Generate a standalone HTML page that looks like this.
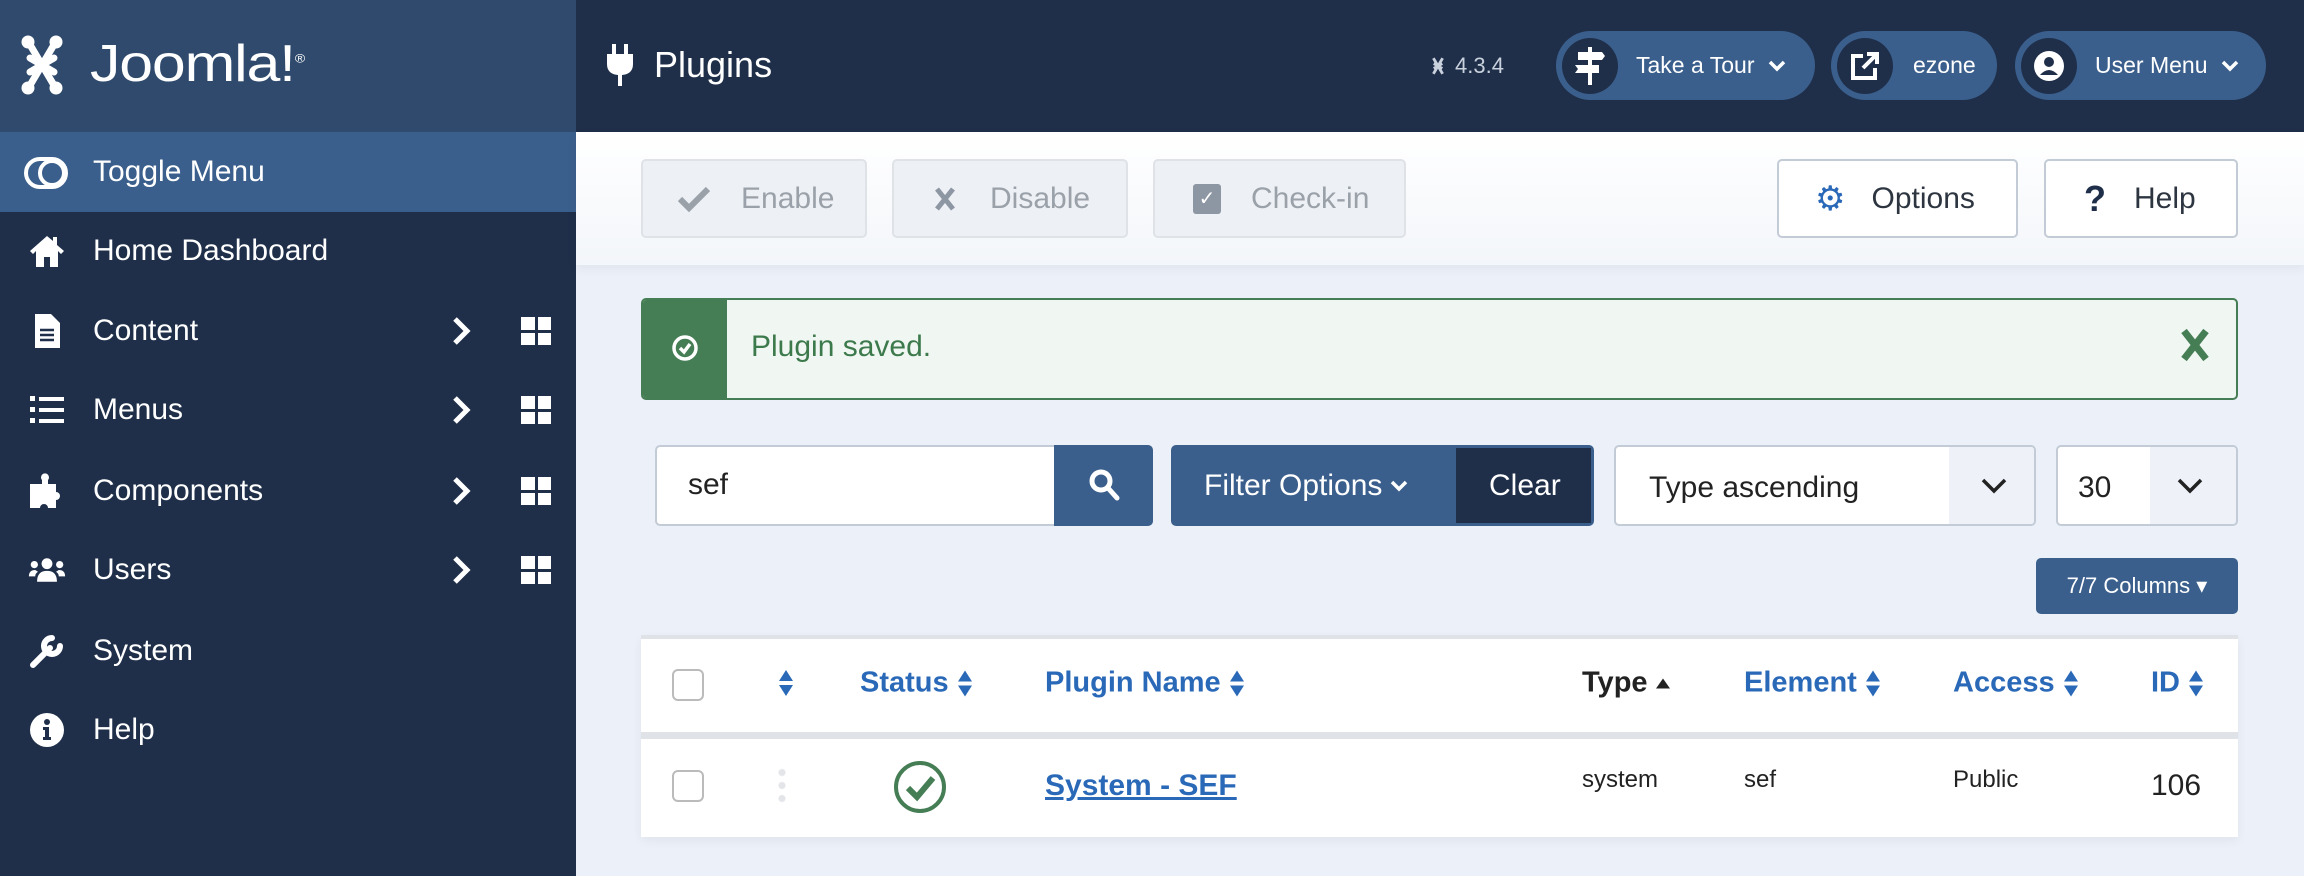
<!DOCTYPE html>
<html><head><meta charset="utf-8"><style>
*{box-sizing:border-box;margin:0;padding:0}
body{width:2304px;height:876px;overflow:hidden;background:#ecf0f8;font-family:"Liberation Sans",sans-serif;position:relative}
.a{position:absolute}
.side{left:0;top:0;width:576px;height:876px;background:#1f2f4a}
.logo{left:0;top:0;width:576px;height:132px;background:#2f4a6d}
.hdr{left:576px;top:0;width:1728px;height:132px;background:#1f2f4a}
.tog{left:0;top:132px;width:576px;height:80px;background:#3b5f8c}
.mi{color:#fff;font-size:30px;left:93px;transform:translateY(-50%)}
.ic{left:28px;width:38px;height:38px;transform:translateY(-50%)}
.chev{left:450px;transform:translateY(-50%)}
.grid{left:521px;width:30px;height:28px;transform:translateY(-50%);display:grid;grid-template-columns:1fr 1fr;gap:3px}
.grid i{background:#fff;display:block}
.pill{top:31px;height:69px;border-radius:35px;background:#3b5f8c;color:#fff;font-size:23px;display:flex;align-items:center}
.pill .c{width:56px;height:56px;border-radius:50%;background:#1f2f4a;margin-left:6px;display:flex;align-items:center;justify-content:center}
.tb{left:576px;top:132px;width:1728px;height:133px;background:linear-gradient(#fff,#f3f6fa);box-shadow:0 4px 10px rgba(0,0,0,.05)}
.btn{top:159px;height:79px;border-radius:5px;display:flex;align-items:center;font-size:30px}
.dis{background:#edf0f4;border:2px solid #dfe3e8;color:#9aa1a9}
.wh{background:#fff;border:2px solid #c3cbd6;color:#2d3540}
.th{top:683px;transform:translateY(-50%);font-size:29px;font-weight:bold;color:#2a69b8;display:flex;align-items:center}
.td{top:786px;transform:translateY(-50%);font-size:24px;color:#222}
.cb{width:32px;height:32px;border:2px solid #bbb;border-radius:6px;background:#fff;transform:translateY(-50%)}
.sa{margin-left:7px}
</style></head><body>
<div class="a side"></div>
<div class="a logo"></div>
<svg class="a" style="left:20px;top:34px" width="44" height="62" viewBox="0 0 44 62"><g fill="none" stroke="#fff" stroke-width="7" stroke-linecap="round"><path d="M9 9 L35 53 M35 9 L9 53 M10 24 L34 38 M34 24 L10 38"/></g><circle cx="8" cy="8" r="6.5" fill="#fff"/><circle cx="36" cy="8" r="6.5" fill="#fff"/><circle cx="8" cy="54" r="6.5" fill="#fff"/><circle cx="36" cy="54" r="6.5" fill="#fff"/></svg>
<div class="a" style="left:90px;top:34px;color:#fff;font-size:52px;transform:scaleX(1.17);transform-origin:left;letter-spacing:-1px">Joomla!<sup style="font-size:12px">®</sup></div>
<div class="a hdr"></div>
<svg class="a" style="left:607px;top:44px" width="26" height="42" viewBox="0 0 26 42"><rect x="5" y="0" width="4" height="10" fill="#fff"/><rect x="17" y="0" width="4" height="10" fill="#fff"/><path d="M0 10H26V20Q26 30 15 31V42H11V31Q0 30 0 20Z" fill="#fff"/></svg>
<div class="a" style="left:654px;top:44px;color:#fff;font-size:36px">Plugins</div>
<svg class="a" style="left:1427px;top:55px" width="22" height="22" viewBox="0 0 44 62"><g fill="none" stroke="#c9d1dc" stroke-width="8"><path d="M9 9 L35 53 M35 9 L9 53 M10 24 L34 38 M34 24 L10 38"/></g></svg>
<div class="a" style="left:1455px;top:53px;color:#c9d1dc;font-size:22px">4.3.4</div>
<div class="a pill" style="left:1556px;width:259px"><div class="c"><svg width="30" height="38" viewBox="0 0 30 38"><rect x="13" y="0" width="4" height="38" fill="#fff"/><path d="M3 5H27L30 9L27 13H3Z M0 18H24V26H0L3 22Z" fill="#fff"/></svg></div><span style="margin-left:18px">Take a Tour</span><svg style="margin-left:14px" width="18" height="14" viewBox="0 0 18 14"><path d="M2 3L9 10L16 3" stroke="#fff" stroke-width="3.5" fill="none"/></svg></div>
<div class="a pill" style="left:1831px;width:166px"><div class="c"><svg width="32" height="32" viewBox="0 0 32 32" fill="none" stroke="#fff" stroke-width="4"><path d="M14 6H4V28H26V18M18 4H28V14M28 4L14 18"/></svg></div><span style="margin-left:20px">ezone</span></div>
<div class="a pill" style="left:2015px;width:251px"><div class="c"><svg width="34" height="34" viewBox="0 0 34 34"><circle cx="17" cy="17" r="15" fill="#fff"/><circle cx="17" cy="13" r="5" fill="#1f2f4a"/><path d="M8 26Q17 16 26 26" fill="#1f2f4a"/></svg></div><span style="margin-left:18px">User Menu</span><svg style="margin-left:14px" width="18" height="14" viewBox="0 0 18 14"><path d="M2 3L9 10L16 3" stroke="#fff" stroke-width="3.5" fill="none"/></svg></div>

<div class="a tog"></div>
<svg class="a" style="left:24px;top:157px" width="44" height="32" viewBox="0 0 44 32" fill="none" stroke="#fff" stroke-width="4"><rect x="2" y="2" width="40" height="28" rx="14"/><circle cx="28" cy="16" r="12"/></svg>
<div class="a mi" style="top:172px">Toggle Menu</div>

<svg class="a ic" style="top:251px" viewBox="0 0 38 38"><path d="M19 4L2 19L5 22L8 19V35H16V25H22V35H30V19L33 22L36 19L29 13V5H25V9Z" fill="#fff"/></svg>
<div class="a mi" style="top:251px">Home Dashboard</div>
<svg class="a ic" style="top:331px" viewBox="0 0 38 38"><path d="M7 2H23L32 11V36H7Z" fill="#fff"/><path d="M12 18H26M12 23H26M12 28H26" stroke="#1f2f4a" stroke-width="2.5"/></svg>
<div class="a mi" style="top:331px">Content</div>
<svg class="a ic" style="top:410px" viewBox="0 0 38 38" fill="#fff"><rect x="2" y="5" width="5" height="5"/><rect x="2" y="16" width="5" height="5"/><rect x="2" y="27" width="5" height="5"/><rect x="11" y="6" width="25" height="4"/><rect x="11" y="17" width="25" height="4"/><rect x="11" y="28" width="25" height="4"/></svg>
<div class="a mi" style="top:410px">Menus</div>
<svg class="a ic" style="top:491px" viewBox="0 0 38 38" fill="#fff"><path d="M2 12H14V8A4 4 0 1 1 20 8V12H28V20A4 4 0 1 1 28 28V36H20A4 4 0 1 0 12 36H2Z"/></svg>
<div class="a mi" style="top:491px">Components</div>
<svg class="a ic" style="top:570px" viewBox="0 0 42 38" fill="#fff"><circle cx="21" cy="12" r="6"/><circle cx="7" cy="13" r="4"/><circle cx="35" cy="13" r="4"/><path d="M10 32Q10 20 21 20Q32 20 32 32Z M1 26Q1 19 8 19L11 21Q8 23 8 26Z M41 26Q41 19 34 19L31 21Q34 23 34 26Z"/></svg>
<div class="a mi" style="top:570px">Users</div>
<svg class="a ic" style="top:651px" viewBox="0 0 38 38"><path d="M5 33L22 16M24 6A8 8 0 1 0 32 14" stroke="#fff" stroke-width="6" stroke-linecap="round" fill="none"/></svg>
<div class="a mi" style="top:651px">System</div>
<svg class="a ic" style="top:730px" viewBox="0 0 38 38"><circle cx="19" cy="19" r="17" fill="#fff"/><circle cx="19" cy="11" r="3" fill="#1f2f4a"/><path d="M15 16H21V26H23V29H15V26H17V19H15Z" fill="#1f2f4a"/></svg>
<div class="a mi" style="top:730px">Help</div>
<svg class="a chev" style="top:331px" width="22" height="30" viewBox="0 0 22 30"><path d="M5 3L17 15L5 27" stroke="#fff" stroke-width="5" fill="none"/></svg>
<svg class="a chev" style="top:410px" width="22" height="30" viewBox="0 0 22 30"><path d="M5 3L17 15L5 27" stroke="#fff" stroke-width="5" fill="none"/></svg>
<svg class="a chev" style="top:491px" width="22" height="30" viewBox="0 0 22 30"><path d="M5 3L17 15L5 27" stroke="#fff" stroke-width="5" fill="none"/></svg>
<svg class="a chev" style="top:570px" width="22" height="30" viewBox="0 0 22 30"><path d="M5 3L17 15L5 27" stroke="#fff" stroke-width="5" fill="none"/></svg>
<div class="a grid" style="top:331px"><i></i><i></i><i></i><i></i></div>
<div class="a grid" style="top:410px"><i></i><i></i><i></i><i></i></div>
<div class="a grid" style="top:491px"><i></i><i></i><i></i><i></i></div>
<div class="a grid" style="top:570px"><i></i><i></i><i></i><i></i></div>

<div class="a tb"></div>
<div class="a btn dis" style="left:641px;width:226px"><svg style="margin-left:34px" width="34" height="28" viewBox="0 0 34 28"><path d="M3 14L12 23L31 4" stroke="#9aa1a9" stroke-width="6" fill="none"/></svg><span style="margin-left:30px">Enable</span></div>
<div class="a btn dis" style="left:892px;width:236px"><svg style="margin-left:40px" width="22" height="26" viewBox="0 0 22 26"><path d="M3 3L19 23M19 3L3 23" stroke="#8d96a3" stroke-width="5" fill="none"/></svg><span style="margin-left:34px">Disable</span></div>
<div class="a btn dis" style="left:1153px;width:253px"><span style="margin-left:38px;width:28px;height:30px;background:#8d96a3;border-radius:3px;color:#fff;font-size:20px;text-align:center;line-height:30px">✓</span><span style="margin-left:30px">Check-in</span></div>
<div class="a btn wh" style="left:1777px;width:241px"><span style="margin-left:36px;color:#2a69b8;font-size:34px">⚙</span><span style="margin-left:26px">Options</span></div>
<div class="a btn wh" style="left:2044px;width:194px"><span style="margin-left:38px;font-weight:bold;font-size:36px;color:#1f2f4a">?</span><span style="margin-left:28px">Help</span></div>

<div class="a" style="left:641px;top:298px;width:1597px;height:102px;border:2px solid #457d54;border-radius:5px;background:#f0f6f2;overflow:hidden">
<div class="a" style="left:0;top:0;width:84px;height:100%;background:#457d54"></div>
<svg class="a" style="left:28px;top:34px" width="28" height="28" viewBox="0 0 28 28"><circle cx="14" cy="14" r="11" fill="none" stroke="#fff" stroke-width="3.5"/><path d="M9 14L13 18L19 10" fill="none" stroke="#fff" stroke-width="3.5"/></svg>
<div class="a" style="left:108px;top:30px;font-size:30px;color:#3c7a4c">Plugin saved.</div>
<svg class="a" style="right:26px;top:28px" width="30" height="34" viewBox="0 0 30 34"><path d="M4 3L26 31M26 3L4 31" stroke="#457d54" stroke-width="7" fill="none"/></svg>
</div>

<div class="a" style="left:655px;top:445px;width:498px;height:81px;background:#fff;border:2px solid #c3cbd6;border-radius:5px"></div>
<div class="a" style="left:688px;top:468px;font-size:30px;color:#222">sef</div>
<div class="a" style="left:1054px;top:445px;width:99px;height:81px;background:#3b5f8c;border-radius:0 5px 5px 0"></div>
<svg class="a" style="left:1088px;top:468px" width="32" height="34" viewBox="0 0 32 34"><circle cx="13" cy="13" r="9" fill="none" stroke="#fff" stroke-width="5"/><path d="M20 20L29 30" stroke="#fff" stroke-width="5" stroke-linecap="round"/></svg>
<div class="a" style="left:1171px;top:445px;width:423px;height:81px;background:#3b5f8c;border-radius:5px;overflow:hidden">
<div class="a" style="left:285px;top:3px;width:135px;height:75px;background:#1f2f4a"></div>
<div class="a" style="left:33px;top:24px;font-size:30px;color:#fff;display:flex;align-items:center">Filter Options<svg style="margin-left:8px" width="18" height="14" viewBox="0 0 18 14"><path d="M2 3L9 10L16 3" stroke="#fff" stroke-width="3.5" fill="none"/></svg></div>
<div class="a" style="left:318px;top:24px;font-size:30px;color:#fff">Clear</div></div>
<div class="a" style="left:1614px;top:445px;width:422px;height:81px;background:#fff;border:2px solid #c3cbd6;border-radius:5px;overflow:hidden"><div class="a" style="left:333px;top:0;width:90px;height:100%;background:#eef1f8"></div>
<div class="a" style="left:33px;top:24px;font-size:30px;color:#222">Type ascending</div>
<svg class="a" style="left:364px;top:30px" width="28" height="18" viewBox="0 0 28 18"><path d="M3 3L14 14L25 3" stroke="#222" stroke-width="3.5" fill="none"/></svg></div>
<div class="a" style="left:2056px;top:445px;width:182px;height:81px;background:#fff;border:2px solid #c3cbd6;border-radius:5px;overflow:hidden"><div class="a" style="left:92px;top:0;width:90px;height:100%;background:#eef1f8"></div>
<div class="a" style="left:20px;top:24px;font-size:30px;color:#222">30</div>
<svg class="a" style="left:118px;top:30px" width="28" height="18" viewBox="0 0 28 18"><path d="M3 3L14 14L25 3" stroke="#222" stroke-width="3.5" fill="none"/></svg></div>

<div class="a" style="left:2036px;top:558px;width:202px;height:56px;background:#3b5f8c;border-radius:5px;color:#fff;font-size:22px;text-align:center;line-height:56px">7/7 Columns ▾</div>

<div class="a" style="left:641px;top:635px;width:1597px;height:202px;background:#fff;border-top:4px solid #dfe3e8;box-shadow:0 4px 10px rgba(0,0,0,.05)"></div>
<div class="a" style="left:641px;top:732px;width:1597px;height:7px;background:#dfe3e8"></div>
<div class="a cb" style="left:672px;top:685px"></div>
<div class="a cb" style="left:672px;top:786px"></div>
<svg class="a" style="left:777px;top:669px" width="18" height="28" viewBox="0 0 18 28"><path d="M9 1L16 12H2Z M2 16H16L9 27Z" fill="#2a69b8"/></svg>
<div class="a" style="left:778px;top:766px;width:8px;height:40px;background:radial-gradient(circle,#e3e5e8 3px,transparent 4px) 0 0/8px 13px"></div>
<div class="a th" style="left:860px">Status<svg class="sa" width="18" height="28" viewBox="0 0 18 28"><path d="M9 1L16 12H2Z M2 16H16L9 27Z" fill="#2a69b8"/></svg></div>
<div class="a th" style="left:1045px">Plugin Name<svg class="sa" width="18" height="28" viewBox="0 0 18 28"><path d="M9 1L16 12H2Z M2 16H16L9 27Z" fill="#2a69b8"/></svg></div>
<div class="a th" style="left:1582px;color:#222">Type<svg class="sa" width="16" height="12" viewBox="0 0 16 12"><path d="M8 1L15 11H1Z" fill="#222"/></svg></div>
<div class="a th" style="left:1744px">Element<svg class="sa" width="18" height="28" viewBox="0 0 18 28"><path d="M9 1L16 12H2Z M2 16H16L9 27Z" fill="#2a69b8"/></svg></div>
<div class="a th" style="left:1953px">Access<svg class="sa" width="18" height="28" viewBox="0 0 18 28"><path d="M9 1L16 12H2Z M2 16H16L9 27Z" fill="#2a69b8"/></svg></div>
<div class="a th" style="left:2151px">ID<svg class="sa" width="18" height="28" viewBox="0 0 18 28"><path d="M9 1L16 12H2Z M2 16H16L9 27Z" fill="#2a69b8"/></svg></div>
<svg class="a" style="left:893px;top:760px" width="54" height="54" viewBox="0 0 54 54"><circle cx="27" cy="27" r="24" fill="none" stroke="#457d54" stroke-width="4"/><path d="M15 28L24 37L40 18" fill="none" stroke="#457d54" stroke-width="6"/></svg>
<div class="a td" style="left:1045px;font-size:30px;font-weight:bold;color:#2a69b8;text-decoration:underline">System - SEF</div>
<div class="a td" style="left:1582px;top:780px">system</div>
<div class="a td" style="left:1744px;top:780px">sef</div>
<div class="a td" style="left:1953px;top:780px">Public</div>
<div class="a td" style="left:2151px;font-size:30px">106</div>
</body></html>
